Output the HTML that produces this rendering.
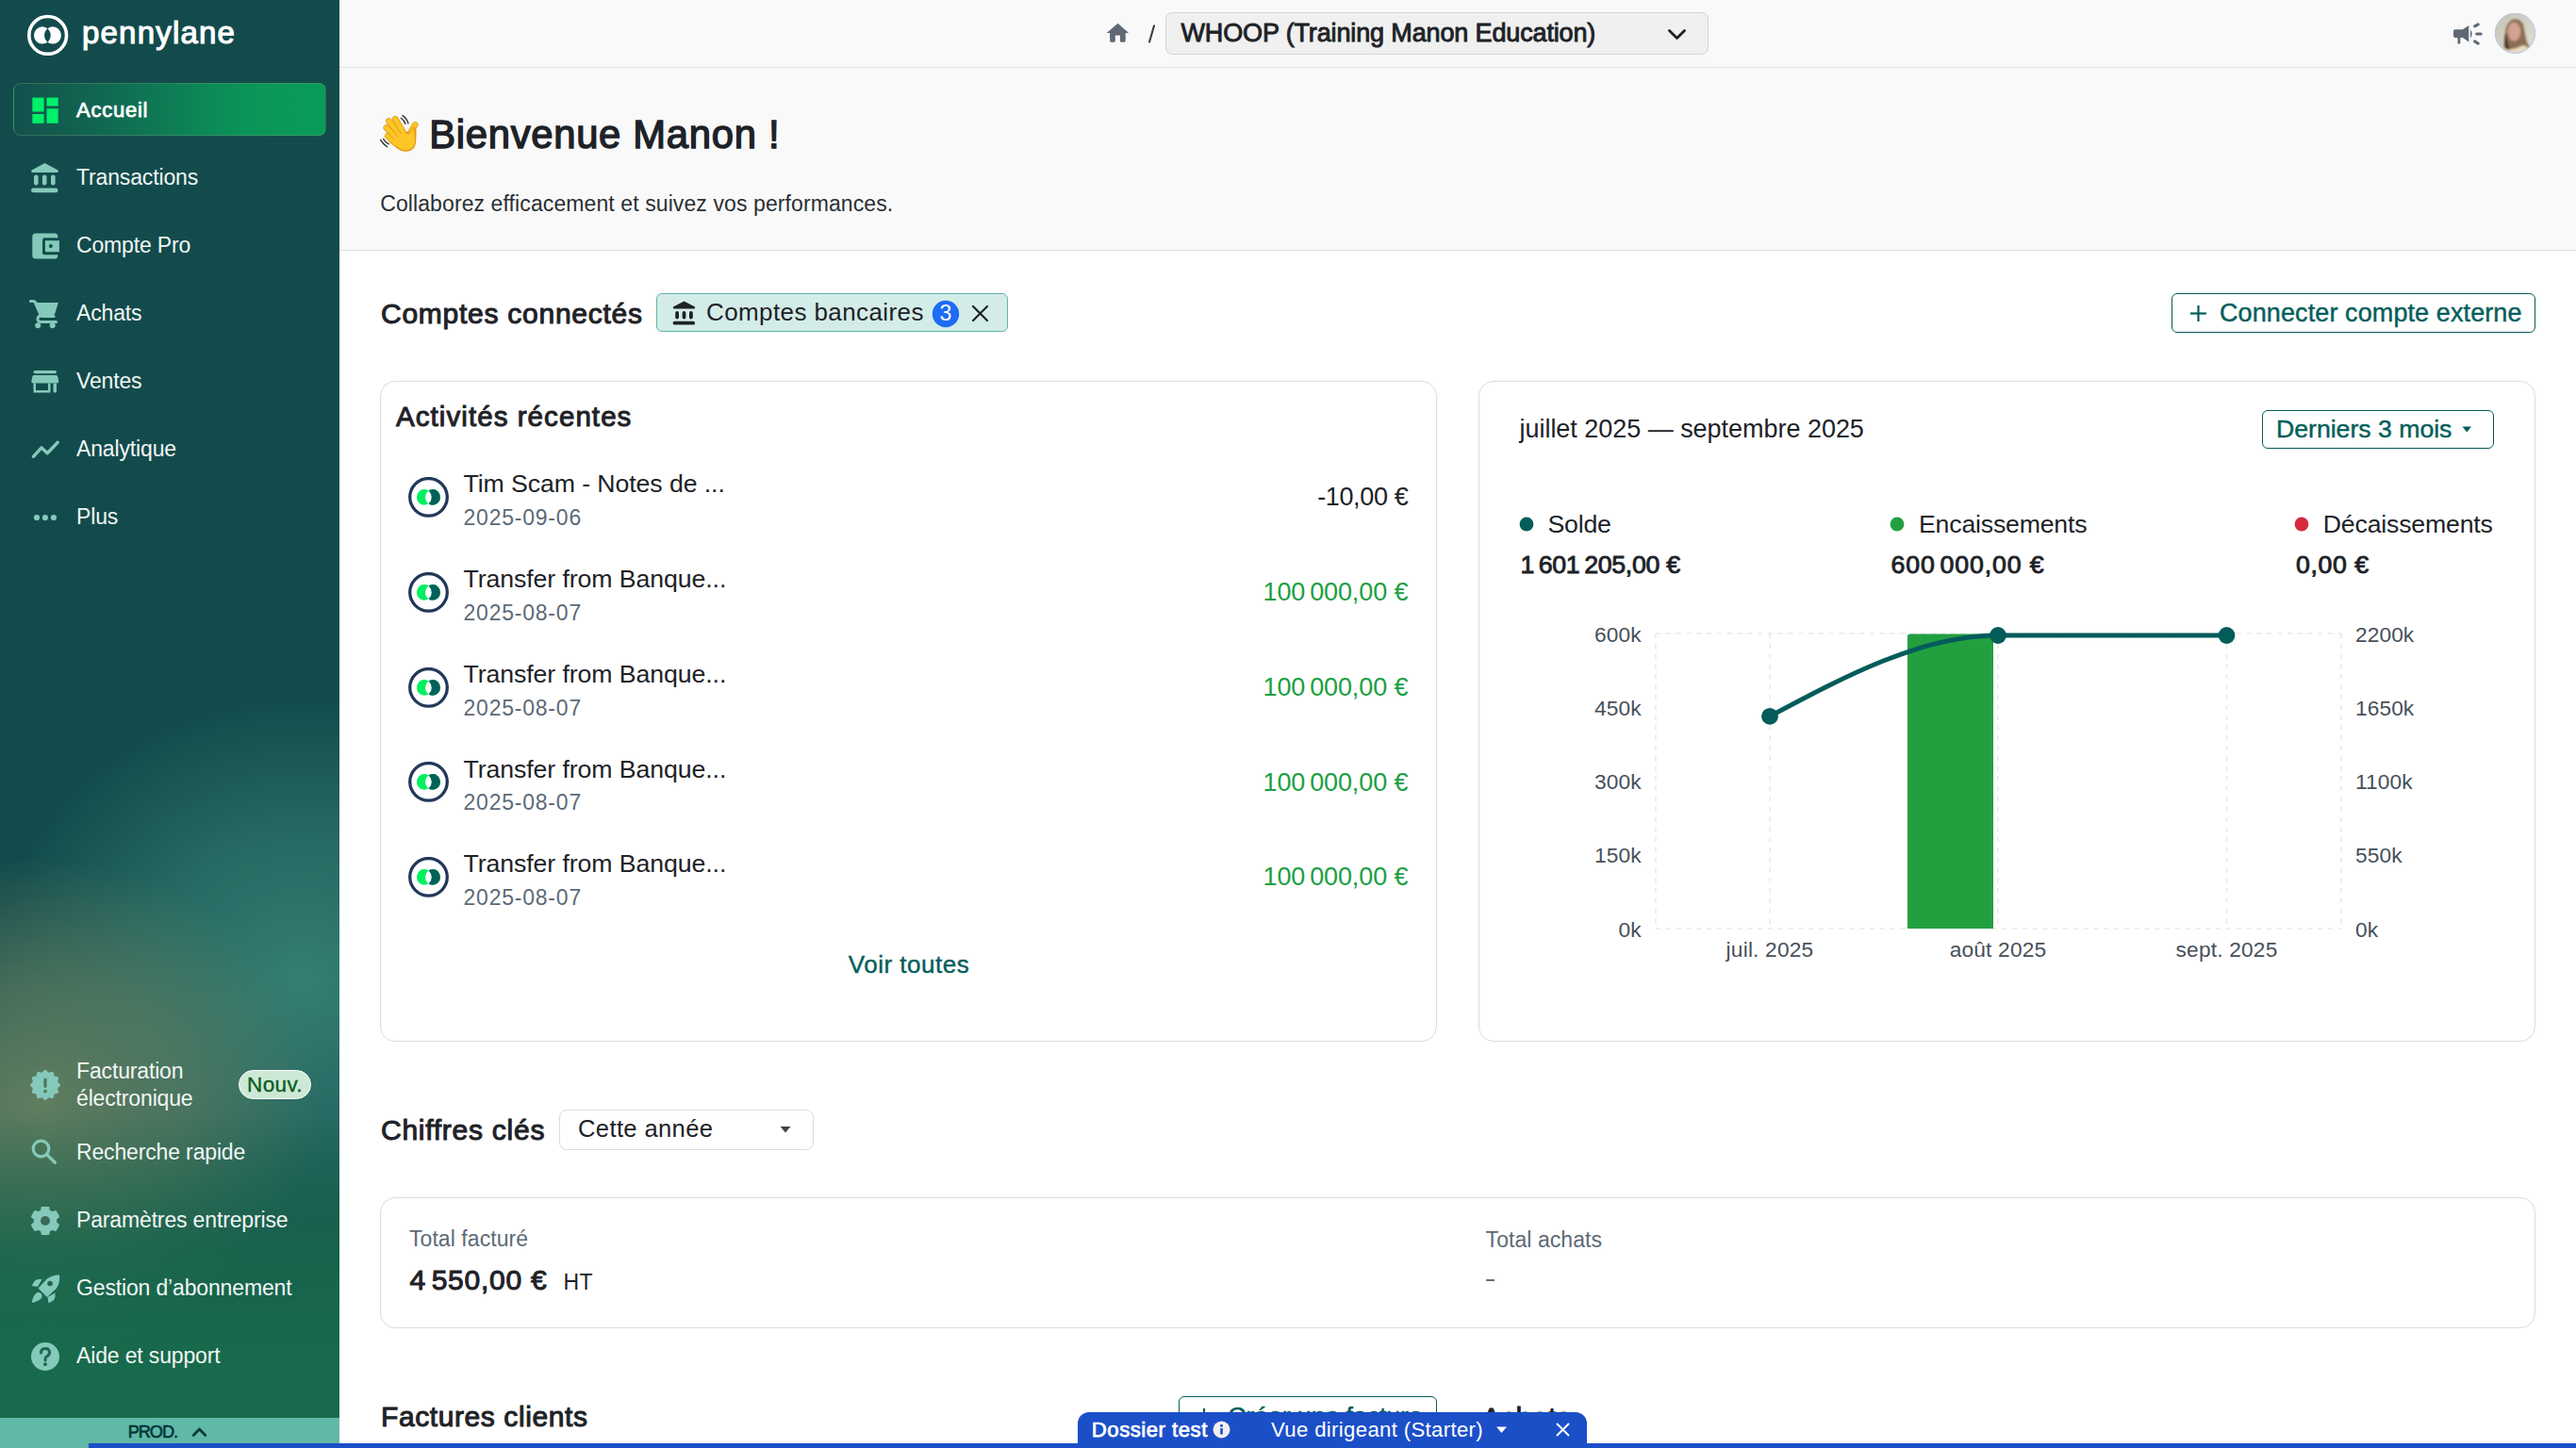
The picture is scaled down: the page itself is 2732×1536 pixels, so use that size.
<!DOCTYPE html>
<html><head><meta charset="utf-8"><title>Pennylane</title>
<style>
html,body{margin:0;padding:0;}
body{width:2732px;height:1536px;overflow:hidden;position:relative;background:#fff;font-family:"Liberation Sans",sans-serif;}
.t{position:absolute;white-space:nowrap;line-height:1;}
</style></head><body>
<div style="position:absolute;left:0px;top:0px;width:360px;height:1536px;background:#134b4c;"></div>
<div style="position:absolute;left:0px;top:0px;width:360px;height:1536px;background:radial-gradient(ellipse 330px 300px at 320px 1040px, rgba(52,126,114,1), rgba(52,126,114,0.6) 50%, rgba(50,124,112,0) 100%);"></div>
<div style="position:absolute;left:0px;top:0px;width:360px;height:1536px;background:radial-gradient(ellipse 300px 260px at 40px 1170px, rgba(100,128,96,0.95), rgba(100,128,96,0.6) 50%, rgba(98,126,94,0) 100%);"></div>
<div style="position:absolute;left:0px;top:0px;width:360px;height:1536px;background:linear-gradient(to bottom, rgba(24,106,76,0) 0px, rgba(24,106,76,0) 1180px, rgba(24,106,76,0.75) 1330px, rgba(24,106,76,1) 1440px);"></div>
<svg style="position:absolute;left:24px;top:12px;" width="54" height="54" viewBox="0 0 54 54"><circle cx="26.65" cy="25.4" r="19.85" fill="none" stroke="#fff" stroke-width="3.6"/><path fill-rule="evenodd" fill="#fff" d="M12.00 25.40 a8.9 9.2 0 1 0 17.80 0 a8.9 9.2 0 1 0 -17.80 0 Z M23.00 25.40 a8.95 9.2 0 1 0 17.90 0 a8.95 9.2 0 1 0 -17.90 0 Z"/></svg>
<div class="t" style="left:87.00px;top:18.00px;font-size:33.00px;font-weight:400;color:#ffffff;letter-spacing:1.20px;-webkit-text-stroke:1.12px #ffffff;">pennylane</div>
<div style="position:absolute;left:14px;top:88px;width:332px;height:56px;box-sizing:border-box;border-radius:8px;border:1px solid rgba(120,160,120,0.35);background:linear-gradient(to right,#14504c 0%,#0f6e53 35%,#0b9558 75%,#0a9c59 100%);"></div>
<svg style="position:absolute;left:34px;top:103px;" width="28" height="28" viewBox="0 0 28 28"><rect x="0.3" y="0.5" width="12.3" height="15" fill="#00f068"/><rect x="0.3" y="18" width="12.3" height="9.8" fill="#00f068"/><rect x="15.5" y="0.5" width="12.2" height="9" fill="#00f068"/><rect x="15.5" y="12.2" width="12.2" height="15.6" fill="#00f068"/></svg>
<div class="t" style="left:81.00px;top:106.00px;font-size:22.00px;font-weight:400;color:#ffffff;letter-spacing:0.75px;-webkit-text-stroke:0.75px #ffffff;">Accueil</div>
<div class="t" style="left:81.00px;top:177.00px;font-size:23.00px;font-weight:400;color:#f2f6f5;letter-spacing:-0.15px;">Transactions</div>
<div class="t" style="left:81.00px;top:249.00px;font-size:23.00px;font-weight:400;color:#f2f6f5;letter-spacing:-0.15px;">Compte Pro</div>
<div class="t" style="left:81.00px;top:321.00px;font-size:23.00px;font-weight:400;color:#f2f6f5;letter-spacing:-0.15px;">Achats</div>
<div class="t" style="left:81.00px;top:393.00px;font-size:23.00px;font-weight:400;color:#f2f6f5;letter-spacing:-0.15px;">Ventes</div>
<div class="t" style="left:81.00px;top:465.00px;font-size:23.00px;font-weight:400;color:#f2f6f5;letter-spacing:-0.15px;">Analytique</div>
<div class="t" style="left:81.00px;top:537.00px;font-size:23.00px;font-weight:400;color:#f2f6f5;letter-spacing:-0.15px;">Plus</div>
<svg style="position:absolute;left:32px;top:172px;" width="31" height="34" viewBox="0 0 31 34"><path d="M15.5 1 L29.5 8.5 Q30.5 11 28.5 11 L2.5 11 Q0.5 11 1.5 8.5 Z" fill="#85c9ba"/><rect x="4" y="13.5" width="4.6" height="11" rx="2.3" fill="#85c9ba"/><rect x="12.9" y="13.5" width="4.6" height="11" rx="2.3" fill="#85c9ba"/><rect x="22" y="13.5" width="4.6" height="11" rx="2.3" fill="#85c9ba"/><rect x="1" y="27.5" width="28.5" height="4.8" rx="2.4" fill="#85c9ba"/></svg>
<svg style="position:absolute;left:34px;top:247px;" width="29" height="28" viewBox="0 0 29 28"><rect x="0.3" y="0.5" width="27" height="27" rx="3.5" fill="#85c9ba"/><rect x="11" y="5.2" width="18" height="18" rx="2.5" fill="#134b4c"/><rect x="13.9" y="8.2" width="15" height="12" fill="#85c9ba"/><circle cx="19.9" cy="13.9" r="2" fill="#134b4c"/></svg>
<svg style="position:absolute;left:30px;top:316px;" width="33" height="34" viewBox="0 0 33 34"><path d="M2.5 3.5 L5.5 3.5 Q7 3.5 7.6 5 L13.5 18.5 Q14 19.5 15.2 19.5 L27 19.5" fill="none" stroke="#85c9ba" stroke-width="3.2" stroke-linecap="round" stroke-linejoin="round"/><path d="M5.8 5 L31 5 Q31.8 5 31.5 6 L28.5 16 Q27.8 18.5 25.5 18.5 L12 18.5 Z" fill="#85c9ba"/><path d="M14 18.5 Q9.5 19.5 10 23 Q10.5 25.5 13.5 25.5 L29.5 25.5" fill="none" stroke="#85c9ba" stroke-width="3" stroke-linecap="round"/><circle cx="10.2" cy="29.3" r="3" fill="#85c9ba"/><circle cx="25.7" cy="29.3" r="3" fill="#85c9ba"/></svg>
<svg style="position:absolute;left:33px;top:392px;" width="30" height="26" viewBox="0 0 30 26"><rect x="2.5" y="1" width="24.5" height="3.2" rx="1.6" fill="#85c9ba"/><path d="M3 6 L26.5 6 Q28 6 28.3 7.5 L29.3 12.5 Q29.5 14.5 27.5 14.5 L2 14.5 Q0 14.5 0.3 12.5 L1.3 7.5 Q1.6 6 3 6 Z" fill="#85c9ba"/><path d="M2.5 14.5 L2.5 24.5 L20.5 24.5 L20.5 14.5 L18 14.5 L18 22 L5 22 L5 14.5 Z" fill="#85c9ba"/><rect x="23.5" y="14.5" width="3.5" height="10" rx="1.5" fill="#85c9ba"/></svg>
<svg style="position:absolute;left:32px;top:466px;" width="32" height="22" viewBox="0 0 32 22"><polyline points="3.4,18.3 12.1,8.9 18.2,14.8 29.2,3.3" fill="none" stroke="#85c9ba" stroke-width="3.4" stroke-linecap="round" stroke-linejoin="round"/></svg>
<svg style="position:absolute;left:34px;top:544px;" width="28" height="10" viewBox="0 0 28 10"><circle cx="5" cy="5" r="3.1" fill="#85c9ba"/><circle cx="13.9" cy="5" r="3.1" fill="#85c9ba"/><circle cx="22.9" cy="5" r="3.1" fill="#85c9ba"/></svg>
<div class="t" style="left:81.00px;top:1125.00px;font-size:23.00px;font-weight:400;color:#f2f6f5;letter-spacing:-0.15px;">Facturation</div>
<div class="t" style="left:81.00px;top:1154.00px;font-size:23.00px;font-weight:400;color:#f2f6f5;letter-spacing:-0.15px;">électronique</div>
<svg style="position:absolute;left:32px;top:1135px;" width="32" height="32" viewBox="0 0 32 32"><polygon points="16.00,0.50 19.31,3.64 23.75,2.58 25.05,6.95 29.42,8.25 28.36,12.69 31.50,16.00 28.36,19.31 29.42,23.75 25.05,25.05 23.75,29.42 19.31,28.36 16.00,31.50 12.69,28.36 8.25,29.42 6.95,25.05 2.58,23.75 3.64,19.31 0.50,16.00 3.64,12.69 2.58,8.25 6.95,6.95 8.25,2.58 12.69,3.64" fill="#85c9ba" stroke="#85c9ba" stroke-width="1.5" stroke-linejoin="round"/><rect x="14.4" y="8.8" width="3.2" height="10" rx="1" fill="#4f7462"/><rect x="14.4" y="21" width="3.2" height="3.2" fill="#4f7462"/></svg>
<div style="position:absolute;left:253px;top:1135px;width:77px;height:31px;box-sizing:border-box;border-radius:16px;background:#cde9d5;border:1.5px solid #ffffff;"></div>
<div class="t" style="left:-208.50px;width:1000px;text-align:center;top:1140.00px;font-size:22.50px;font-weight:400;color:#0b5a22;letter-spacing:0.37px;-webkit-text-stroke:0.36px #0b5a22;">Nouv.</div>
<div class="t" style="left:81.00px;top:1211.00px;font-size:23.00px;font-weight:400;color:#f2f6f5;letter-spacing:-0.15px;">Recherche rapide</div>
<div class="t" style="left:81.00px;top:1283.00px;font-size:23.00px;font-weight:400;color:#f2f6f5;letter-spacing:-0.15px;">Paramètres entreprise</div>
<div class="t" style="left:81.00px;top:1355.00px;font-size:23.00px;font-weight:400;color:#f2f6f5;letter-spacing:-0.15px;">Gestion d’abonnement</div>
<div class="t" style="left:81.00px;top:1427.00px;font-size:23.00px;font-weight:400;color:#f2f6f5;letter-spacing:-0.15px;">Aide et support</div>
<svg style="position:absolute;left:33px;top:1208px;" width="28" height="28" viewBox="0 0 28 28"><circle cx="10.5" cy="10.5" r="8.3" fill="none" stroke="#85c9ba" stroke-width="3.2"/><line x1="16.6" y1="16.6" x2="25.3" y2="25.3" stroke="#85c9ba" stroke-width="3.4" stroke-linecap="round"/></svg>
<svg style="position:absolute;left:33px;top:1280px;" width="30" height="30" viewBox="0 0 30 30"><polygon points="11.63,0.38 18.37,0.38 19.12,4.26 22.24,6.06 25.97,4.77 29.34,10.61 26.36,13.20 26.36,16.80 29.34,19.39 25.97,25.23 22.24,23.94 19.12,25.74 18.37,29.62 11.63,29.62 10.88,25.74 7.76,23.94 4.03,25.23 0.66,19.39 3.64,16.80 3.64,13.20 0.66,10.61 4.03,4.77 7.76,6.06 10.88,4.26" fill="#85c9ba" stroke="#85c9ba" stroke-width="1.6" stroke-linejoin="round"/><circle cx="15" cy="15" r="5" fill="#3b6a58"/></svg>
<svg style="position:absolute;left:33px;top:1352px;" width="31" height="31" viewBox="0 0 31 31"><path d="M30 0.5 Q31 8 27 14.5 L17 24 L7.5 14.5 L17 4.5 Q23.5 0 30 0.5 Z" fill="#85c9ba"/><circle cx="20" cy="9.5" r="2.8" fill="#24624f"/><path d="M11.5 5 L7.5 5 Q5 5.3 3.5 7 L0.7 12 L7 13 Z" fill="#85c9ba"/><path d="M25.5 19.5 L25.5 23.5 Q25.2 26 23.5 27.5 L18.5 30.5 L17.5 24 Z" fill="#85c9ba"/><path d="M6.5 19 Q2.5 21 0.5 30 Q9.5 28 11.5 24 Q12 21 9.5 19.5 Q8 18.5 6.5 19 Z" fill="#85c9ba"/></svg>
<svg style="position:absolute;left:33px;top:1424px;" width="30" height="30" viewBox="0 0 30 30"><circle cx="15" cy="15" r="15" fill="#85c9ba"/><path d="M10.5 11 Q10.5 6.5 15 6.5 Q19.5 6.5 19.5 10.8 Q19.5 13.5 16.5 15 Q15 15.8 15 17.8 L15 19" fill="none" stroke="#1f6650" stroke-width="3" stroke-linecap="round"/><circle cx="15" cy="23.2" r="1.9" fill="#1f6650"/></svg>
<div style="position:absolute;left:0px;top:1504px;width:360px;height:32px;background:#60b8a6;"></div>
<div class="t" style="left:135.80px;top:1510.00px;font-size:18.20px;font-weight:400;color:#03363a;letter-spacing:-1.10px;-webkit-text-stroke:0.62px #03363a;">PROD.</div>
<svg style="position:absolute;left:202px;top:1512px;" width="19" height="14" viewBox="0 0 19 14"><polyline points="3.2,10.5 9.5,4 15.8,10.5" fill="none" stroke="#0c3a3a" stroke-width="2.8" stroke-linecap="round" stroke-linejoin="round"/></svg>
<div style="position:absolute;left:360px;top:0px;width:2372px;height:71px;background:#f9f9f9;"></div>
<div style="position:absolute;left:360px;top:71px;width:2372px;height:1px;background:#e2e4e6;"></div>
<svg style="position:absolute;left:1166px;top:18px;" width="66" height="34" viewBox="0 0 66 34"><path d="M19.5 6.7 L30.6 16.4 Q31 17 30.3 17 L27.7 17 L27.7 25.3 Q27.7 26.8 26.2 26.8 L23.4 26.8 Q21.9 26.8 21.9 25.3 L21.9 19.5 L16.8 19.5 L16.8 25.3 Q16.8 26.8 15.3 26.8 L12.6 26.8 Q11.1 26.8 11.1 25.3 L11.1 17 L8.5 17 Q7.8 17 8.2 16.4 Z" fill="#5e6974"/><line x1="58" y1="9.2" x2="53" y2="26.5" stroke="#36404a" stroke-width="2.1" stroke-linecap="round"/></svg>
<div style="position:absolute;left:1236px;top:13px;width:576px;height:45px;box-sizing:border-box;background:#f0f0f0;border:1px solid #d3d6da;border-radius:7px;"></div>
<div class="t" style="left:1252.50px;top:22.00px;font-size:27.00px;font-weight:400;color:#1d2227;letter-spacing:-0.14px;-webkit-text-stroke:0.92px #1d2227;">WHOOP (Training Manon Education)</div>
<svg style="position:absolute;left:1766px;top:28px;" width="25" height="18" viewBox="0 0 25 18"><polyline points="4.5,4.5 12.5,12.5 20.5,4.5" fill="none" stroke="#1d2227" stroke-width="2.8" stroke-linecap="round" stroke-linejoin="round"/></svg>
<svg style="position:absolute;left:2595px;top:18px;" width="45" height="34" viewBox="0 0 45 34"><path d="M9 13.2 L16.9 13.2 L23.3 8.9 L23.3 26.5 L16.9 22.1 L14.3 22.1 L14.3 27.8 Q14.3 28.6 13.5 28.6 L12.3 28.6 Q11.5 28.6 11.5 27.8 L11.5 22.1 L9 22.1 Q7.05 22.1 7.05 20.1 L7.05 15.2 Q7.05 13.2 9 13.2 Z" fill="#5e6974"/><path d="M25 13.2 Q28.2 17.9 25 22.8 Z" fill="#5e6974"/><g stroke="#5e6974" stroke-width="3" stroke-linecap="round"><line x1="29.6" y1="9.8" x2="33.2" y2="7.9"/><line x1="31.6" y1="17.9" x2="36.2" y2="17.9"/><line x1="29.6" y1="25.9" x2="33.2" y2="28.1"/></g></svg>
<svg style="position:absolute;left:2646px;top:14px;" width="43" height="43" viewBox="0 0 43 43"><defs><clipPath id="av"><circle cx="21.45" cy="21.25" r="21.2"/></clipPath><linearGradient id="avbg" x1="0" y1="0" x2="1" y2="1"><stop offset="0" stop-color="#c6c2b6"/><stop offset="1" stop-color="#e2dfd5"/></linearGradient><filter id="avb" x="-10%" y="-10%" width="120%" height="120%"><feGaussianBlur stdDeviation="0.9"/></filter></defs><g clip-path="url(#av)"><rect width="43" height="43" fill="url(#avbg)"/><g filter="url(#avb)"><path d="M9 46 Q9.5 30 11.5 17 Q14 7 21 6.3 Q28.5 6.3 30.5 14 Q32 24 34 31 Q36.5 37 41 41 L38 46 Z" fill="#8a6e52"/><ellipse cx="20.4" cy="19.6" rx="6.9" ry="10" fill="#d3a290"/><path d="M12 22 Q13 32 16 38 L12 42 Q9.5 32 11 22 Z" fill="#4a3625"/><path d="M2 46 Q5 37 9 36 Q12 40 18 38 Q24 37 30 34 Q37 36 42 43 L42 46 Z" fill="#e9dcc2"/></g></g><circle cx="21.45" cy="21.25" r="21.2" fill="none" stroke="#a8bfe6" stroke-width="0.9"/></svg>
<div style="position:absolute;left:360px;top:72px;width:2372px;height:194px;background:#f9f9f9;"></div>
<div style="position:absolute;left:360px;top:265px;width:2372px;height:1.5px;background:#d9dde0;"></div>
<svg style="position:absolute;left:395px;top:115px;" width="55" height="55" viewBox="0 0 55 55"><line x1="39.5" y1="27" x2="45.3" y2="17.3" stroke="#e39a1c" stroke-width="6.4" stroke-linecap="round"/><line x1="39.5" y1="27" x2="45.3" y2="17.3" stroke="#fdc526" stroke-width="4.8" stroke-linecap="round"/><path d="M19 33 L32.5 23.5 L39 25.5 L44.2 19 L46.6 23 L46.2 36 Q45 44.5 37 45.7 Q31 46.5 25 41.5 L17.2 35.2 Z" fill="#e39a1c"/><line x1="16.2" y1="29.3" x2="25" y2="37" stroke="#e39a1c" stroke-width="6.6" stroke-linecap="round"/><line x1="16.2" y1="29.3" x2="25" y2="37" stroke="#fdc526" stroke-width="5.0" stroke-linecap="round"/><line x1="14.8" y1="20.6" x2="26.5" y2="32" stroke="#e39a1c" stroke-width="6.6" stroke-linecap="round"/><line x1="14.8" y1="20.6" x2="26.5" y2="32" stroke="#fdc526" stroke-width="5.0" stroke-linecap="round"/><line x1="17.4" y1="13.4" x2="28.5" y2="27.5" stroke="#e39a1c" stroke-width="6.6" stroke-linecap="round"/><line x1="17.4" y1="13.4" x2="28.5" y2="27.5" stroke="#fdc526" stroke-width="5.0" stroke-linecap="round"/><line x1="24.3" y1="11.2" x2="32.5" y2="25" stroke="#e39a1c" stroke-width="6.6" stroke-linecap="round"/><line x1="24.3" y1="11.2" x2="32.5" y2="25" stroke="#fdc526" stroke-width="5.0" stroke-linecap="round"/><path d="M22.5 33 L32.5 25.8 L39 27.3 L44 21 L45.1 35.8 Q43.8 43.6 36.8 44.3 Q31.2 45 26 40.6 L20 35.5 Z" fill="#fdc526"/><g fill="none" stroke="#333" stroke-width="1.4" stroke-linecap="round"><path d="M30.3 10.3 Q33.6 12.6 35 16.4"/><path d="M32 7.6 Q36.3 10.2 37.9 15.8"/><path d="M8.7 33.3 Q11.3 38 15.5 40.6"/><path d="M11.7 32.5 Q13.6 36.2 17.3 37.8"/></g></svg>
<div class="t" style="left:455.20px;top:122.00px;font-size:41.80px;font-weight:400;color:#1d2227;letter-spacing:0.70px;-webkit-text-stroke:1.42px #1d2227;">Bienvenue Manon !</div>
<div class="t" style="left:403.20px;top:205.00px;font-size:23.00px;font-weight:400;color:#2a2f34;letter-spacing:0.10px;">Collaborez efficacement et suivez vos performances.</div>
<div style="position:absolute;left:360px;top:266px;width:2372px;height:1270px;background:#ffffff;"></div>
<div class="t" style="left:404.00px;top:318.00px;font-size:30.00px;font-weight:400;color:#1d2227;letter-spacing:0.74px;-webkit-text-stroke:1.02px #1d2227;">Comptes connectés</div>
<div style="position:absolute;left:696px;top:311px;width:373px;height:41px;box-sizing:border-box;background:#d4ece8;border:1px solid #5db6a4;border-radius:6px;"></div>
<svg style="position:absolute;left:713px;top:318px;" width="26" height="28" viewBox="0 0 26 28"><path d="M12.5 1.5 L24 7.5 Q24.8 9.5 23 9.5 L2 9.5 Q0.2 9.5 1 7.5 Z" fill="#1d2227"/><rect x="3.2" y="12" width="3.8" height="8.5" rx="1.9" fill="#1d2227"/><rect x="10.6" y="12" width="3.8" height="8.5" rx="1.9" fill="#1d2227"/><rect x="18" y="12" width="3.8" height="8.5" rx="1.9" fill="#1d2227"/><rect x="0.6" y="22.8" width="23.5" height="3.8" rx="1.9" fill="#1d2227"/></svg>
<div class="t" style="left:749.00px;top:318.00px;font-size:26.00px;font-weight:400;color:#1d2227;letter-spacing:0.40px;">Comptes bancaires</div>
<svg style="position:absolute;left:988px;top:318px;" width="30" height="30" viewBox="0 0 30 30"><circle cx="15" cy="15" r="14.2" fill="#1d6cf5"/></svg>
<div class="t" style="left:503.00px;width:1000px;text-align:center;top:321.00px;font-size:23.00px;font-weight:400;color:#ffffff;letter-spacing:0.00px;">3</div>
<svg style="position:absolute;left:1029px;top:322px;" width="21" height="21" viewBox="0 0 21 21"><line x1="3" y1="3" x2="18" y2="18" stroke="#1d2227" stroke-width="2.2" stroke-linecap="round"/><line x1="18" y1="3" x2="3" y2="18" stroke="#1d2227" stroke-width="2.2" stroke-linecap="round"/></svg>
<div style="position:absolute;left:2303px;top:311px;width:386px;height:42px;box-sizing:border-box;border:1px solid #045c5a;border-radius:6px;background:#fff;"></div>
<svg style="position:absolute;left:2321px;top:322px;" width="21" height="21" viewBox="0 0 21 21"><line x1="10.5" y1="2" x2="10.5" y2="19" stroke="#055e5b" stroke-width="2.2"/><line x1="2" y1="10.5" x2="19" y2="10.5" stroke="#055e5b" stroke-width="2.2"/></svg>
<div class="t" style="left:2354.00px;top:319.00px;font-size:27.00px;font-weight:400;color:#055e5b;letter-spacing:0.10px;-webkit-text-stroke:0.43px #055e5b;">Connecter compte externe</div>
<div style="position:absolute;left:403px;top:404px;width:1121px;height:701px;box-sizing:border-box;border:1.5px solid #d9dce0;border-radius:16px;"></div>
<div class="t" style="left:420.00px;top:427.00px;font-size:29.50px;font-weight:400;color:#1d2227;letter-spacing:1.07px;-webkit-text-stroke:1.00px #1d2227;">Activités récentes</div>
<svg style="position:absolute;left:432px;top:506.0px;" width="45" height="45" viewBox="0 0 45 45"><defs><clipPath id="rh0"><rect x="22.45" y="0" width="30" height="45"/></clipPath></defs><circle cx="22.5" cy="21.3" r="19.8" fill="#fff" stroke="#23385a" stroke-width="3.3"/><path fill-rule="evenodd" fill="#00f060" d="M9.95 21.40 a7.95 8.35 0 1 0 15.90 0 a7.95 8.35 0 1 0 -15.90 0 Z M19.05 21.40 a7.95 8.35 0 1 0 15.90 0 a7.95 8.35 0 1 0 -15.90 0 Z"/><path fill-rule="evenodd" fill="#04605a" clip-path="url(#rh0)" d="M9.95 21.40 a7.95 8.35 0 1 0 15.90 0 a7.95 8.35 0 1 0 -15.90 0 Z M19.05 21.40 a7.95 8.35 0 1 0 15.90 0 a7.95 8.35 0 1 0 -15.90 0 Z"/></svg>
<div class="t" style="left:491.50px;top:500.00px;font-size:26.70px;font-weight:400;color:#1d2227;letter-spacing:-0.09px;">Tim Scam - Notes de ...</div>
<div class="t" style="left:491.50px;top:538.00px;font-size:23.00px;font-weight:400;color:#5d6a76;letter-spacing:0.78px;">2025-09-06</div>
<div class="t" style="right:1238.70px;top:514.00px;font-size:27.00px;font-weight:400;color:#1d2227;letter-spacing:-0.37px;">-10,00 €</div>
<svg style="position:absolute;left:432px;top:606.8px;" width="45" height="45" viewBox="0 0 45 45"><defs><clipPath id="rh1"><rect x="22.45" y="0" width="30" height="45"/></clipPath></defs><circle cx="22.5" cy="21.3" r="19.8" fill="#fff" stroke="#23385a" stroke-width="3.3"/><path fill-rule="evenodd" fill="#00f060" d="M9.95 21.40 a7.95 8.35 0 1 0 15.90 0 a7.95 8.35 0 1 0 -15.90 0 Z M19.05 21.40 a7.95 8.35 0 1 0 15.90 0 a7.95 8.35 0 1 0 -15.90 0 Z"/><path fill-rule="evenodd" fill="#04605a" clip-path="url(#rh1)" d="M9.95 21.40 a7.95 8.35 0 1 0 15.90 0 a7.95 8.35 0 1 0 -15.90 0 Z M19.05 21.40 a7.95 8.35 0 1 0 15.90 0 a7.95 8.35 0 1 0 -15.90 0 Z"/></svg>
<div class="t" style="left:491.50px;top:601.00px;font-size:26.70px;font-weight:400;color:#1d2227;letter-spacing:-0.09px;">Transfer from Banque...</div>
<div class="t" style="left:491.50px;top:639.00px;font-size:23.00px;font-weight:400;color:#5d6a76;letter-spacing:0.78px;">2025-08-07</div>
<div class="t" style="right:1238.70px;top:615.00px;font-size:27.00px;font-weight:400;color:#1c9f42;letter-spacing:-0.12px;">100<span style="letter-spacing:-2.6px"> </span>000,00 €</div>
<svg style="position:absolute;left:432px;top:707.6px;" width="45" height="45" viewBox="0 0 45 45"><defs><clipPath id="rh2"><rect x="22.45" y="0" width="30" height="45"/></clipPath></defs><circle cx="22.5" cy="21.3" r="19.8" fill="#fff" stroke="#23385a" stroke-width="3.3"/><path fill-rule="evenodd" fill="#00f060" d="M9.95 21.40 a7.95 8.35 0 1 0 15.90 0 a7.95 8.35 0 1 0 -15.90 0 Z M19.05 21.40 a7.95 8.35 0 1 0 15.90 0 a7.95 8.35 0 1 0 -15.90 0 Z"/><path fill-rule="evenodd" fill="#04605a" clip-path="url(#rh2)" d="M9.95 21.40 a7.95 8.35 0 1 0 15.90 0 a7.95 8.35 0 1 0 -15.90 0 Z M19.05 21.40 a7.95 8.35 0 1 0 15.90 0 a7.95 8.35 0 1 0 -15.90 0 Z"/></svg>
<div class="t" style="left:491.50px;top:702.00px;font-size:26.70px;font-weight:400;color:#1d2227;letter-spacing:-0.09px;">Transfer from Banque...</div>
<div class="t" style="left:491.50px;top:740.00px;font-size:23.00px;font-weight:400;color:#5d6a76;letter-spacing:0.78px;">2025-08-07</div>
<div class="t" style="right:1238.70px;top:716.00px;font-size:27.00px;font-weight:400;color:#1c9f42;letter-spacing:-0.12px;">100<span style="letter-spacing:-2.6px"> </span>000,00 €</div>
<svg style="position:absolute;left:432px;top:808.4px;" width="45" height="45" viewBox="0 0 45 45"><defs><clipPath id="rh3"><rect x="22.45" y="0" width="30" height="45"/></clipPath></defs><circle cx="22.5" cy="21.3" r="19.8" fill="#fff" stroke="#23385a" stroke-width="3.3"/><path fill-rule="evenodd" fill="#00f060" d="M9.95 21.40 a7.95 8.35 0 1 0 15.90 0 a7.95 8.35 0 1 0 -15.90 0 Z M19.05 21.40 a7.95 8.35 0 1 0 15.90 0 a7.95 8.35 0 1 0 -15.90 0 Z"/><path fill-rule="evenodd" fill="#04605a" clip-path="url(#rh3)" d="M9.95 21.40 a7.95 8.35 0 1 0 15.90 0 a7.95 8.35 0 1 0 -15.90 0 Z M19.05 21.40 a7.95 8.35 0 1 0 15.90 0 a7.95 8.35 0 1 0 -15.90 0 Z"/></svg>
<div class="t" style="left:491.50px;top:803.00px;font-size:26.70px;font-weight:400;color:#1d2227;letter-spacing:-0.09px;">Transfer from Banque...</div>
<div class="t" style="left:491.50px;top:840.00px;font-size:23.00px;font-weight:400;color:#5d6a76;letter-spacing:0.78px;">2025-08-07</div>
<div class="t" style="right:1238.70px;top:817.00px;font-size:27.00px;font-weight:400;color:#1c9f42;letter-spacing:-0.12px;">100<span style="letter-spacing:-2.6px"> </span>000,00 €</div>
<svg style="position:absolute;left:432px;top:909.2px;" width="45" height="45" viewBox="0 0 45 45"><defs><clipPath id="rh4"><rect x="22.45" y="0" width="30" height="45"/></clipPath></defs><circle cx="22.5" cy="21.3" r="19.8" fill="#fff" stroke="#23385a" stroke-width="3.3"/><path fill-rule="evenodd" fill="#00f060" d="M9.95 21.40 a7.95 8.35 0 1 0 15.90 0 a7.95 8.35 0 1 0 -15.90 0 Z M19.05 21.40 a7.95 8.35 0 1 0 15.90 0 a7.95 8.35 0 1 0 -15.90 0 Z"/><path fill-rule="evenodd" fill="#04605a" clip-path="url(#rh4)" d="M9.95 21.40 a7.95 8.35 0 1 0 15.90 0 a7.95 8.35 0 1 0 -15.90 0 Z M19.05 21.40 a7.95 8.35 0 1 0 15.90 0 a7.95 8.35 0 1 0 -15.90 0 Z"/></svg>
<div class="t" style="left:491.50px;top:903.00px;font-size:26.70px;font-weight:400;color:#1d2227;letter-spacing:-0.09px;">Transfer from Banque...</div>
<div class="t" style="left:491.50px;top:941.00px;font-size:23.00px;font-weight:400;color:#5d6a76;letter-spacing:0.78px;">2025-08-07</div>
<div class="t" style="right:1238.70px;top:917.00px;font-size:27.00px;font-weight:400;color:#1c9f42;letter-spacing:-0.12px;">100<span style="letter-spacing:-2.6px"> </span>000,00 €</div>
<div class="t" style="left:464.00px;width:1000px;text-align:center;top:1010.00px;font-size:26.00px;font-weight:400;color:#055e5b;letter-spacing:0.50px;-webkit-text-stroke:0.42px #055e5b;">Voir toutes</div>
<div style="position:absolute;left:1568px;top:404px;width:1121px;height:701px;box-sizing:border-box;border:1.5px solid #d9dce0;border-radius:16px;"></div>
<div class="t" style="left:1611.50px;top:442.00px;font-size:27.00px;font-weight:400;color:#1d2227;letter-spacing:-0.03px;">juillet 2025 — septembre 2025</div>
<div style="position:absolute;left:2399px;top:435px;width:246px;height:41px;box-sizing:border-box;border:1px solid #045c5a;border-radius:6px;"></div>
<div class="t" style="left:2414.00px;top:442.00px;font-size:26.70px;font-weight:400;color:#055e5b;letter-spacing:-0.03px;-webkit-text-stroke:0.43px #055e5b;">Derniers 3 mois</div>
<svg style="position:absolute;left:2609px;top:450px;" width="15" height="10" viewBox="0 0 15 10"><path d="M2.5 2.6 L12 2.6 L7.25 8.4 Z" fill="#055e5b"/></svg>
<svg style="position:absolute;left:1611px;top:548px;" width="16" height="16" viewBox="0 0 16 16"><circle cx="8" cy="8" r="7.4" fill="#045c5a"/></svg>
<div class="t" style="left:1641.50px;top:543.00px;font-size:26.70px;font-weight:400;color:#1d2227;letter-spacing:-0.20px;">Solde</div>
<div class="t" style="left:1612.40px;top:586.00px;font-size:26.70px;font-weight:400;color:#1d2227;letter-spacing:-0.30px;-webkit-text-stroke:0.91px #1d2227;">1<span style="letter-spacing:-2.6px"> </span>601<span style="letter-spacing:-2.6px"> </span>205,00 €</div>
<svg style="position:absolute;left:2004px;top:548px;" width="16" height="16" viewBox="0 0 16 16"><circle cx="8" cy="8" r="7.4" fill="#22a040"/></svg>
<div class="t" style="left:2035.00px;top:543.00px;font-size:26.70px;font-weight:400;color:#1d2227;letter-spacing:-0.20px;">Encaissements</div>
<div class="t" style="left:2005.40px;top:586.00px;font-size:26.70px;font-weight:400;color:#1d2227;letter-spacing:0.90px;-webkit-text-stroke:0.91px #1d2227;">600<span style="letter-spacing:-2.6px"> </span>000,00 €</div>
<svg style="position:absolute;left:2433px;top:548px;" width="16" height="16" viewBox="0 0 16 16"><circle cx="8" cy="8" r="7.4" fill="#d62a3c"/></svg>
<div class="t" style="left:2463.80px;top:543.00px;font-size:26.70px;font-weight:400;color:#1d2227;letter-spacing:-0.20px;">Décaissements</div>
<div class="t" style="left:2435.00px;top:586.00px;font-size:26.70px;font-weight:400;color:#1d2227;letter-spacing:0.60px;-webkit-text-stroke:0.91px #1d2227;">0,00 €</div>
<svg style="position:absolute;left:0;top:0" width="2732" height="1536" viewBox="0 0 2732 1536"><g stroke="#e7e9eb" stroke-width="1.5" stroke-dasharray="5.3 5.5" fill="none"><line x1="1756" y1="672" x2="2483" y2="672"/><line x1="1756" y1="985" x2="2483" y2="985"/><line x1="1756" y1="672" x2="1756" y2="985"/><line x1="1877" y1="672" x2="1877" y2="985"/><line x1="2119" y1="672" x2="2119" y2="985"/><line x1="2361.5" y1="672" x2="2361.5" y2="985"/><line x1="2483" y1="672" x2="2483" y2="985"/></g><path d="M2023 985 L2023 675 Q2023 672.5 2025.5 672.5 L2111.5 672.5 Q2114 672.5 2114 675 L2114 985 Z" fill="#22a040"/><path d="M1877 759.8 C1957.8 716.7 2038.2 674 2119 674 L2361.5 674" fill="none" stroke="#045c5a" stroke-width="5"/><circle cx="1877" cy="759.8" r="8.9" fill="#045c5a"/><circle cx="2119" cy="674" r="8.9" fill="#045c5a"/><circle cx="2361.5" cy="674" r="8.9" fill="#045c5a"/></svg>
<div class="t" style="right:991.30px;top:662.00px;font-size:22.70px;font-weight:400;color:#46505a;letter-spacing:0.10px;">600k</div>
<div class="t" style="left:2498.00px;top:662.00px;font-size:22.70px;font-weight:400;color:#46505a;letter-spacing:0.10px;">2200k</div>
<div class="t" style="right:991.30px;top:740.00px;font-size:22.70px;font-weight:400;color:#46505a;letter-spacing:0.10px;">450k</div>
<div class="t" style="left:2498.00px;top:740.00px;font-size:22.70px;font-weight:400;color:#46505a;letter-spacing:0.10px;">1650k</div>
<div class="t" style="right:991.30px;top:818.00px;font-size:22.70px;font-weight:400;color:#46505a;letter-spacing:0.10px;">300k</div>
<div class="t" style="left:2498.00px;top:818.00px;font-size:22.70px;font-weight:400;color:#46505a;letter-spacing:0.10px;">1100k</div>
<div class="t" style="right:991.30px;top:896.00px;font-size:22.70px;font-weight:400;color:#46505a;letter-spacing:0.10px;">150k</div>
<div class="t" style="left:2498.00px;top:896.00px;font-size:22.70px;font-weight:400;color:#46505a;letter-spacing:0.10px;">550k</div>
<div class="t" style="right:991.30px;top:975.00px;font-size:22.70px;font-weight:400;color:#46505a;letter-spacing:0.10px;">0k</div>
<div class="t" style="left:2498.00px;top:975.00px;font-size:22.70px;font-weight:400;color:#46505a;letter-spacing:0.10px;">0k</div>
<div class="t" style="left:1377.00px;width:1000px;text-align:center;top:996.00px;font-size:22.70px;font-weight:400;color:#46505a;letter-spacing:0.20px;">juil. 2025</div>
<div class="t" style="left:1619.00px;width:1000px;text-align:center;top:996.00px;font-size:22.70px;font-weight:400;color:#46505a;letter-spacing:0.20px;">août 2025</div>
<div class="t" style="left:1861.50px;width:1000px;text-align:center;top:996.00px;font-size:22.70px;font-weight:400;color:#46505a;letter-spacing:0.20px;">sept. 2025</div>
<div class="t" style="left:404.00px;top:1184.00px;font-size:30.00px;font-weight:400;color:#1d2227;letter-spacing:0.74px;-webkit-text-stroke:1.02px #1d2227;">Chiffres clés</div>
<div style="position:absolute;left:593px;top:1177px;width:270px;height:43px;box-sizing:border-box;border:1.5px solid #d9dce0;border-radius:8px;"></div>
<div class="t" style="left:613.00px;top:1185.00px;font-size:25.60px;font-weight:400;color:#1d2227;letter-spacing:0.35px;">Cette année</div>
<svg style="position:absolute;left:826px;top:1193px;" width="14" height="11" viewBox="0 0 14 11"><path d="M1.5 2 L12.5 2 L7 8.5 Z" fill="#3b444d"/></svg>
<div style="position:absolute;left:403px;top:1270px;width:2286px;height:139px;box-sizing:border-box;border:1.5px solid #d9dce0;border-radius:16px;"></div>
<div class="t" style="left:434.00px;top:1303.00px;font-size:23.00px;font-weight:400;color:#5d6a76;letter-spacing:0.06px;">Total facturé</div>
<div class="t" style="left:434.50px;top:1343.00px;font-size:30.00px;font-weight:400;color:#1d2227;letter-spacing:0.75px;-webkit-text-stroke:1.02px #1d2227;">4<span style="letter-spacing:-2.6px"> </span>550,00 €</div>
<div class="t" style="left:597.50px;top:1349.00px;font-size:23.00px;font-weight:400;color:#1d2227;letter-spacing:0.30px;">HT</div>
<div class="t" style="left:1575.60px;top:1304.00px;font-size:23.00px;font-weight:400;color:#5d6a76;letter-spacing:0.06px;">Total achats</div>
<div style="position:absolute;left:1576px;top:1357px;width:9px;height:2px;background:#66727d;"></div>
<div class="t" style="left:404.00px;top:1488.00px;font-size:30.00px;font-weight:400;color:#1d2227;letter-spacing:0.59px;-webkit-text-stroke:1.02px #1d2227;">Factures clients</div>
<div style="position:absolute;left:1250px;top:1481px;width:274px;height:50px;box-sizing:border-box;border:1px solid #045c5a;border-radius:6px;"></div>
<div class="t" style="left:1302.00px;top:1490.00px;font-size:27.00px;font-weight:400;color:#055e5b;letter-spacing:-0.20px;-webkit-text-stroke:0.43px #055e5b;">Créer une facture</div>
<svg style="position:absolute;left:1268px;top:1493px;" width="18" height="18" viewBox="0 0 18 18"><line x1="9" y1="1" x2="9" y2="17" stroke="#055e5b" stroke-width="2.2"/><line x1="1" y1="9" x2="17" y2="9" stroke="#055e5b" stroke-width="2.2"/></svg>
<div class="t" style="left:1571.50px;top:1489.00px;font-size:30.00px;font-weight:400;color:#1d2227;letter-spacing:0.50px;-webkit-text-stroke:1.02px #1d2227;">Achats</div>
<div style="position:absolute;left:94px;top:1531px;width:2638px;height:5px;background:#1b4fc8;"></div>
<div style="position:absolute;left:1143px;top:1498px;width:540px;height:38px;background:#1b4fc8;border-radius:12px 12px 0 0;"></div>
<div class="t" style="left:1157.80px;top:1506.00px;font-size:22.20px;font-weight:400;color:#ffffff;letter-spacing:0.49px;-webkit-text-stroke:0.75px #ffffff;">Dossier test</div>
<svg style="position:absolute;left:1286px;top:1507px;" width="19" height="19" viewBox="0 0 19 19"><circle cx="9.5" cy="9.5" r="9" fill="#f3eeee"/><rect x="8.2" y="8" width="2.6" height="6.5" fill="#1b4fc8"/><circle cx="9.5" cy="5.2" r="1.5" fill="#1b4fc8"/></svg>
<div class="t" style="left:1348.00px;top:1506.00px;font-size:22.20px;font-weight:400;color:#ffffff;letter-spacing:0.33px;">Vue dirigeant (Starter)</div>
<svg style="position:absolute;left:1586px;top:1512px;" width="13" height="10" viewBox="0 0 13 10"><path d="M1 1.5 L12 1.5 L6.5 8 Z" fill="#ffffff"/></svg>
<svg style="position:absolute;left:1649px;top:1508px;" width="17" height="17" viewBox="0 0 17 17"><line x1="2.5" y1="2.5" x2="14.5" y2="14.5" stroke="#fff" stroke-width="1.9" stroke-linecap="round"/><line x1="14.5" y1="2.5" x2="2.5" y2="14.5" stroke="#fff" stroke-width="1.9" stroke-linecap="round"/></svg>
</body></html>
